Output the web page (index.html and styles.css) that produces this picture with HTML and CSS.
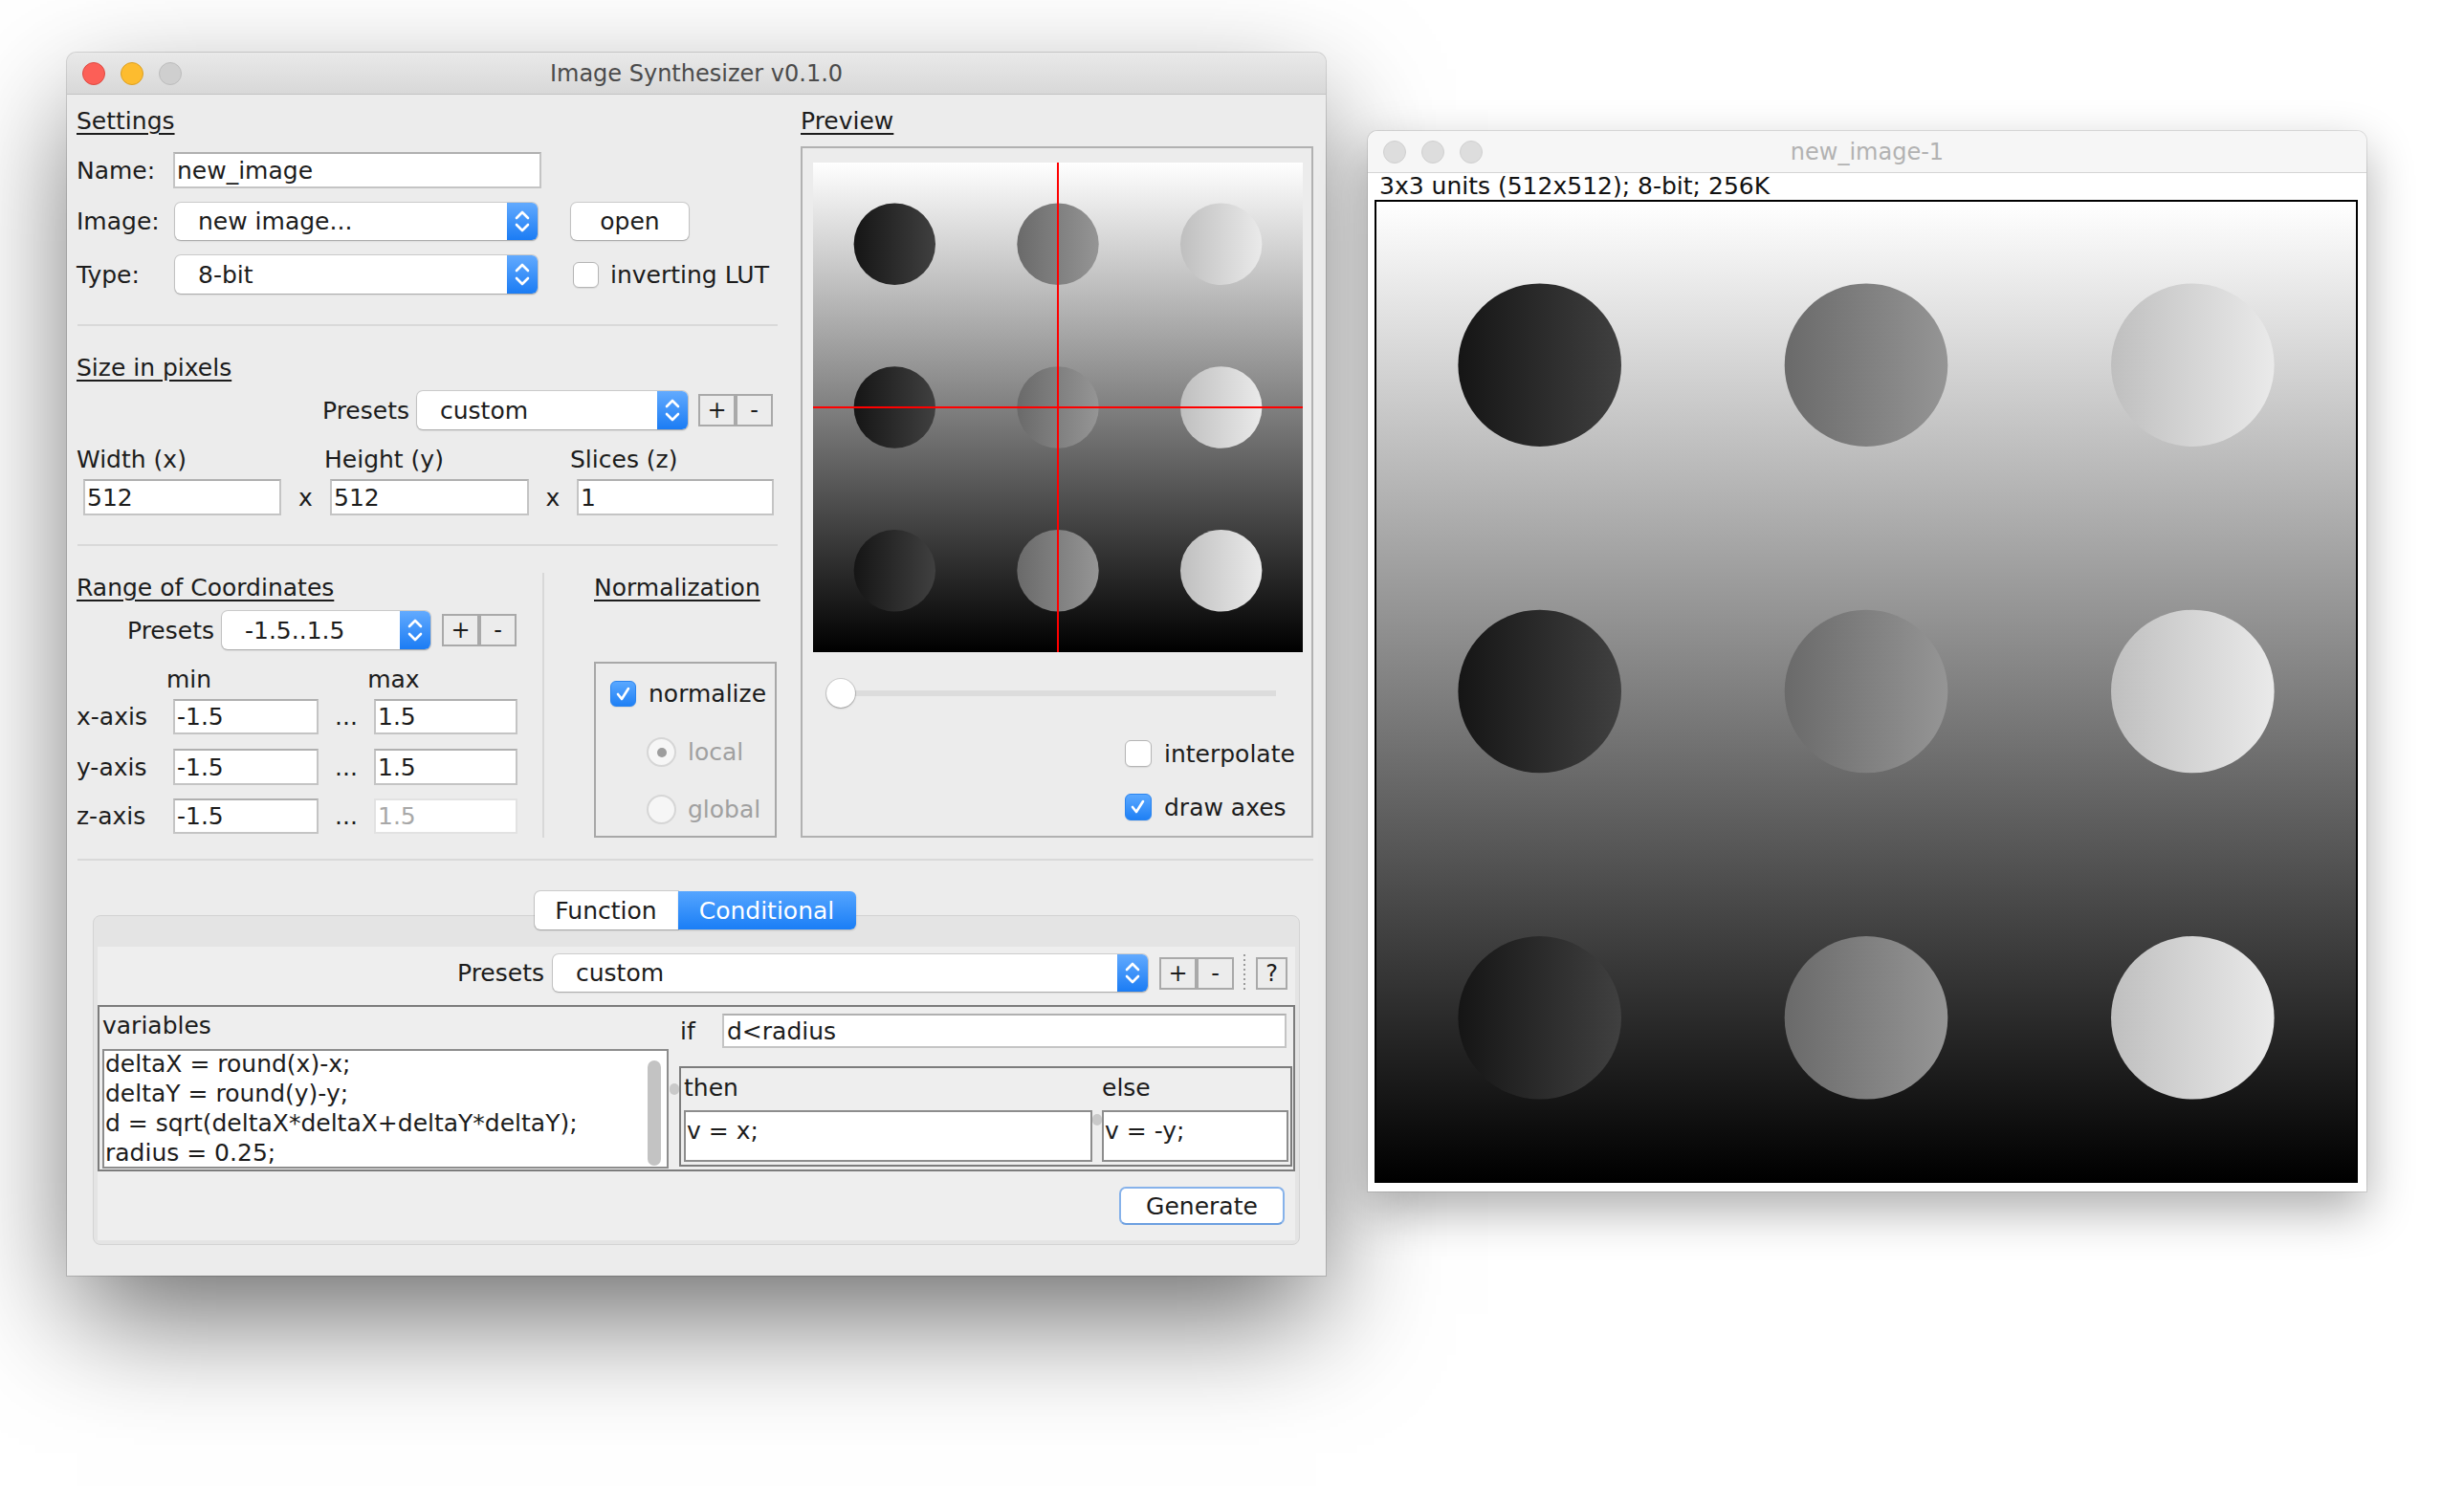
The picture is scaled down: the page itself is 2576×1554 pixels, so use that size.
FILE: index.html
```html
<!DOCTYPE html>
<html>
<head>
<meta charset="utf-8">
<title>Image Synthesizer</title>
<link rel="stylesheet" href="styles.css">
</head>
<body>
<div class="desk">

  <div class="win main-win">
    <div class="titlebar">
      <div class="lights"><span class="light red"></span><span class="light yellow"></span><span class="light gray"></span></div>
      <div class="title">Image Synthesizer v0.1.0</div>
      <div></div>
    </div>
    <div class="main-body">
      <div class="top">
        <div class="left-col">
          <div class="hdr h-settings">Settings</div>
          <div class="row r-name"><span class="lbl w101">Name:</span><div class="field w385">new_image</div></div>
          <div class="row r-image"><span class="lbl w103">Image:</span>
            <div class="combo w379"><span class="ctext">new image...</span><span class="carrow"><svg width="32" height="39" viewBox="0 0 32 39"><path d="M10 16 L16 10 L22 16" fill="none" stroke="#fff" stroke-width="2.6" stroke-linecap="round" stroke-linejoin="round"/><path d="M10 23 L16 29 L22 23" fill="none" stroke="#fff" stroke-width="2.6" stroke-linecap="round" stroke-linejoin="round"/></svg></span></div>
            <div class="btn open">open</div>
          </div>
          <div class="row r-type"><span class="lbl w103">Type:</span>
            <div class="combo w379"><span class="ctext">8-bit</span><span class="carrow"><svg width="32" height="40" viewBox="0 0 32 40"><path d="M10 16 L16 10 L22 16" fill="none" stroke="#fff" stroke-width="2.6" stroke-linecap="round" stroke-linejoin="round"/><path d="M10 24 L16 30 L22 24" fill="none" stroke="#fff" stroke-width="2.6" stroke-linecap="round" stroke-linejoin="round"/></svg></span></div>
            <span class="chk inv"></span><span class="chklbl">inverting LUT</span>
          </div>
          <div class="sep sep1"></div>

          <div class="hdr h-size">Size in pixels</div>
          <div class="row r-presets">
            <span class="lbl plbl">Presets</span>
            <div class="combo w283"><span class="ctext">custom</span><span class="carrow"><svg width="32" height="40" viewBox="0 0 32 40"><path d="M10 16 L16 10 L22 16" fill="none" stroke="#fff" stroke-width="2.6" stroke-linecap="round" stroke-linejoin="round"/><path d="M10 24 L16 30 L22 24" fill="none" stroke="#fff" stroke-width="2.6" stroke-linecap="round" stroke-linejoin="round"/></svg></span></div>
            <div class="pm pm-size"><span>+</span><span>-</span></div>
          </div>
          <div class="row r-dimlbl"><span>Width (x)</span><span>Height (y)</span><span>Slices (z)</span></div>
          <div class="row r-dims">
            <div class="field w207">512</div><span class="xs w51">x</span>
            <div class="field w208">512</div><span class="xs w50">x</span>
            <div class="field w206">1</div>
          </div>
          <div class="sep sep2"></div>

          <div class="range-sec">
            <div class="range-left">
              <div class="hdr">Range of Coordinates</div>
              <div class="row r-rpresets">
                <span class="lbl rplbl">Presets</span>
                <div class="combo w218"><span class="ctext">-1.5..1.5</span><span class="carrow"><svg width="32" height="40" viewBox="0 0 32 40"><path d="M10 16 L16 10 L22 16" fill="none" stroke="#fff" stroke-width="2.6" stroke-linecap="round" stroke-linejoin="round"/><path d="M10 24 L16 30 L22 24" fill="none" stroke="#fff" stroke-width="2.6" stroke-linecap="round" stroke-linejoin="round"/></svg></span></div>
                <div class="pm pm-range"><span>+</span><span>-</span></div>
              </div>
              <div class="row r-minmax"><span class="mn">min</span><span class="mx">max</span></div>
              <div class="row r-axis r-x"><span class="lbl w101">x-axis</span><div class="field w152">-1.5</div><span class="dots">...</span><div class="field w150">1.5</div></div>
              <div class="row r-axis r-y"><span class="lbl w101">y-axis</span><div class="field w152">-1.5</div><span class="dots">...</span><div class="field w150">1.5</div></div>
              <div class="row r-axis r-z"><span class="lbl w101">z-axis</span><div class="field w152">-1.5</div><span class="dots">...</span><div class="field w150 disabled">1.5</div></div>
            </div>
            <div class="vsep"></div>
            <div class="norm">
              <div class="hdr">Normalization</div>
              <div class="nbox">
                <div class="nrow n-norm"><span class="chk on"><svg width="27" height="27" viewBox="0 0 27 27"><path d="M8 14 L12 19 L19 8" fill="none" stroke="#fff" stroke-width="2.6" stroke-linecap="round" stroke-linejoin="round"/></svg></span><span class="chklbl">normalize</span></div>
                <div class="nrow n-local"><span class="radio sel"><span class="rdot"></span></span><span class="rlbl">local</span></div>
                <div class="nrow n-global"><span class="radio"></span><span class="rlbl">global</span></div>
              </div>
            </div>
          </div>
        </div>

        <div class="right-col">
          <div class="hdr h-preview">Preview</div>
          <div class="pbox">
            <div class="pimg">
              <svg width="512" height="512" viewBox="0 0 512 512">
                <defs>
                  <linearGradient id="pbg" x1="0" y1="0" x2="0" y2="1"><stop offset="0" stop-color="#ffffff"/><stop offset="1" stop-color="#000000"/></linearGradient>
                  <linearGradient id="pc1"><stop offset="0" stop-color="#151515"/><stop offset="1" stop-color="#404040"/></linearGradient>
                  <linearGradient id="pc2"><stop offset="0" stop-color="#6a6a6a"/><stop offset="1" stop-color="#959595"/></linearGradient>
                  <linearGradient id="pc3"><stop offset="0" stop-color="#bfbfbf"/><stop offset="1" stop-color="#eaeaea"/></linearGradient>
                </defs>
                <rect width="512" height="512" fill="url(#pbg)"/>
                <circle cx="85.3" cy="85.3" r="42.7" fill="url(#pc1)"/>
                <circle cx="256" cy="85.3" r="42.7" fill="url(#pc2)"/>
                <circle cx="426.7" cy="85.3" r="42.7" fill="url(#pc3)"/>
                <circle cx="85.3" cy="256" r="42.7" fill="url(#pc1)"/>
                <circle cx="256" cy="256" r="42.7" fill="url(#pc2)"/>
                <circle cx="426.7" cy="256" r="42.7" fill="url(#pc3)"/>
                <circle cx="85.3" cy="426.7" r="42.7" fill="url(#pc1)"/>
                <circle cx="256" cy="426.7" r="42.7" fill="url(#pc2)"/>
                <circle cx="426.7" cy="426.7" r="42.7" fill="url(#pc3)"/>
                <rect x="255" y="0" width="2" height="512" fill="#ff0000" shape-rendering="crispEdges"/>
                <rect x="0" y="255" width="512" height="2" fill="#ff0000" shape-rendering="crispEdges"/>
              </svg>
            </div>
            <div class="slider"><span class="thumb"></span></div>
            <div class="prow pr-interp"><span class="chk"></span><span class="chklbl">interpolate</span></div>
            <div class="prow pr-axes"><span class="chk on"><svg width="27" height="27" viewBox="0 0 27 27"><path d="M8 14 L12 19 L19 8" fill="none" stroke="#fff" stroke-width="2.6" stroke-linecap="round" stroke-linejoin="round"/></svg></span><span class="chklbl">draw axes</span></div>
          </div>
        </div>
      </div>

      <div class="sep sep3"></div>

      <div class="tabs"><span class="tab tab-fn">Function</span><span class="tab tab-cond">Conditional</span></div>
      <div class="panel">
        <div class="panel-inner">
          <div class="row r-bpresets">
            <span class="lbl bplbl">Presets</span>
            <div class="combo w622"><span class="ctext">custom</span><span class="carrow"><svg width="32" height="39" viewBox="0 0 32 39"><path d="M10 16 L16 10 L22 16" fill="none" stroke="#fff" stroke-width="2.6" stroke-linecap="round" stroke-linejoin="round"/><path d="M10 23 L16 29 L22 23" fill="none" stroke="#fff" stroke-width="2.6" stroke-linecap="round" stroke-linejoin="round"/></svg></span></div>
            <div class="pm pm-bottom"><span>+</span><span>-</span></div>
            <span class="dotsep"></span>
            <span class="qbtn">?</span>
          </div>
          <div class="codebox">
            <div class="varpane">
              <div class="varlbl">variables</div>
              <div class="textarea vars">
                <div class="lines">deltaX = round(x)-x;<br>deltaY = round(y)-y;<br>d = sqrt(deltaX*deltaX+deltaY*deltaY);<br>radius = 0.25;</div>
                <div class="scroll"><span class="sthumb"></span></div>
              </div>
            </div>
            <div class="splitter s-main"><span class="sdot"></span></div>
            <div class="condpane">
              <div class="ifrow"><span class="iflbl">if</span><div class="field ifield">d&lt;radius</div></div>
              <div class="tebox">
                <span class="tlbl">then</span><span></span><span class="tlbl">else</span>
                <div class="textarea small">v = x;</div>
                <div class="splitter s-te"><span class="sdot"></span></div>
                <div class="textarea small">v = -y;</div>
              </div>
            </div>
          </div>
          <div class="genrow"><span class="genbtn">Generate</span></div>
        </div>
      </div>
    </div>
  </div>

  <div class="win img-win">
    <div class="titlebar tb-light">
      <div class="lights"><span class="light dimlight"></span><span class="light dimlight"></span><span class="light dimlight"></span></div>
      <div class="title dimtitle">new_image-1</div>
      <div></div>
    </div>
    <div class="info">3x3 units (512x512); 8-bit; 256K</div>
    <div class="bigimg">
      <svg width="1024" height="1024" viewBox="0 0 1024 1024">
        <defs>
          <linearGradient id="bbg" x1="0" y1="0" x2="0" y2="1"><stop offset="0" stop-color="#ffffff"/><stop offset="1" stop-color="#000000"/></linearGradient>
          <linearGradient id="bc1"><stop offset="0" stop-color="#151515"/><stop offset="1" stop-color="#404040"/></linearGradient>
          <linearGradient id="bc2"><stop offset="0" stop-color="#6a6a6a"/><stop offset="1" stop-color="#959595"/></linearGradient>
          <linearGradient id="bc3"><stop offset="0" stop-color="#bfbfbf"/><stop offset="1" stop-color="#eaeaea"/></linearGradient>
        </defs>
        <rect width="1024" height="1024" fill="url(#bbg)"/>
        <circle cx="170.7" cy="170.7" r="85.3" fill="url(#bc1)"/>
        <circle cx="512" cy="170.7" r="85.3" fill="url(#bc2)"/>
        <circle cx="853.3" cy="170.7" r="85.3" fill="url(#bc3)"/>
        <circle cx="170.7" cy="512" r="85.3" fill="url(#bc1)"/>
        <circle cx="512" cy="512" r="85.3" fill="url(#bc2)"/>
        <circle cx="853.3" cy="512" r="85.3" fill="url(#bc3)"/>
        <circle cx="170.7" cy="853.3" r="85.3" fill="url(#bc1)"/>
        <circle cx="512" cy="853.3" r="85.3" fill="url(#bc2)"/>
        <circle cx="853.3" cy="853.3" r="85.3" fill="url(#bc3)"/>
      </svg>
    </div>
  </div>

</div>
</body>
</html>
```
FILE: styles.css
```css
* { box-sizing: border-box; }
html, body { margin: 0; padding: 0; }
body {
  width: 2576px; height: 1554px; overflow: hidden; background: #ffffff;
  font-family: "DejaVu Sans", "Liberation Sans", sans-serif; font-size: 25px; color: #1c1c1c;
}
.desk { position: relative; width: 2576px; height: 1554px; }
.win { position: absolute; }

/* main window */
.main-win {
  left: 70px; top: 55px; width: 1316px; height: 1279px;
  background: #ececec; border-radius: 10px 10px 0 0;
  box-shadow: 0 50px 120px -10px rgba(0,0,0,0.6), 0 0 0 1px rgba(0,0,0,0.14);
}
.titlebar {
  height: 44px; display: grid; grid-template-columns: 1fr auto 1fr; align-items: center;
  background: linear-gradient(#e9e9e9, #d8d8d8); border-bottom: 1px solid #c3c3c3;
  border-radius: 10px 10px 0 0;
}
.lights { display: flex; gap: 16px; padding-left: 16px; }
.light { width: 24px; height: 24px; border-radius: 50%; display: block; }
.red { background: #fc5f57; border: 1px solid #de4a42; }
.yellow { background: #fdbc2f; border: 1px solid #dca024; }
.gray { background: #cfcfcf; border: 1px solid #bdbdbd; }
.title { font-size: 24px; color: #4b4b4b; white-space: nowrap; }

.main-body { padding: 0 13px 0 10px; }
.top { display: flex; }
.left-col { width: 733px; }
.right-col { width: 536px; margin-left: 24px; }

.hdr { height: 30px; line-height: 30px; text-decoration: underline; text-underline-offset: 4px; text-decoration-thickness: 2px; white-space: nowrap; }
.h-settings, .h-preview { margin-top: 13px; }

.row { display: flex; align-items: center; white-space: nowrap; }
.lbl { display: inline-block; flex: none; }
.w101 { width: 101px; }
.w103 { width: 103px; }

.field {
  height: 100%; background: #fff; border: 2px solid #c4c4c4; border-top-color: #b0b0b0;
  display: flex; align-items: center; padding-left: 2px; flex: none;
}
.field.disabled { color: #a8a8a8; border-color: #e2e2e2; }
.w385 { width: 385px; }
.w207 { width: 207px; }
.w208 { width: 208px; }
.w206 { width: 206px; }
.w152 { width: 152px; }
.w150 { width: 150px; }

.combo {
  height: 100%; display: flex; align-items: stretch; background: #fff; border-radius: 6px; flex: none;
  box-shadow: 0 0 0 1px rgba(0,0,0,0.13), 0 1px 2px rgba(0,0,0,0.22);
}
.ctext { flex: 1; display: flex; align-items: center; padding-left: 24px; }
.carrow {
  width: 32px; flex: none; border-radius: 0 6px 6px 0;
  background: linear-gradient(#62aafe, #1b7cf4); display: flex; align-items: center; justify-content: center;
}
.carrow svg { display: block; }
.w379 { width: 379px; }
.w283 { width: 283px; }
.w218 { width: 218px; }
.w622 { width: 622px; }

.btn {
  height: 100%; display: flex; align-items: center; justify-content: center; background: #fff;
  border-radius: 6px; box-shadow: 0 0 0 1px rgba(0,0,0,0.13), 0 1px 2px rgba(0,0,0,0.22);
}
.open { width: 123px; margin-left: 35px; }

.chk {
  width: 27px; height: 27px; flex: none; border-radius: 6px; background: #fff;
  border: 1px solid #b5b5b5; box-shadow: 0 1px 1px rgba(0,0,0,0.08); display: flex;
}
.chk.on { background: linear-gradient(#5aa8ff, #1f80f5); border-color: #2a84ef; }
.chk svg { display: block; margin: -1px; }
.chklbl { margin-left: 12px; }
.inv { margin-left: 37px; }

.r-name { margin-top: 17px; height: 38px; }
.r-image { margin-top: 15px; height: 39px; }
.r-type { margin-top: 16px; height: 40px; }

.sep { height: 2px; background: #d9d9d9; }
.sep1 { margin-top: 32px; margin-left: 1px; }
.h-size { margin-top: 29px; }
.r-presets { margin-top: 9px; height: 40px; }
.plbl { width: 99px; margin-left: 257px; }
.pm { display: flex; height: 34px; flex: none; }
.pm span {
  width: 39px; height: 34px; border: 2px solid #a9a9a9; background: #ececec;
  display: flex; align-items: center; justify-content: center; font-size: 24px;
}
.pm-size { margin-left: 11px; }
.r-dimlbl { margin-top: 16px; height: 30px; display: grid; grid-template-columns: 259px 257px 1fr; }
.r-dims { margin-top: 6px; height: 38px; padding-left: 7px; }
.xs { text-align: center; flex: none; }
.w51 { width: 51px; }
.w50 { width: 50px; }
.sep2 { margin-top: 30px; margin-left: 1px; }

.range-sec { display: flex; align-items: flex-start; }
.range-left { width: 487px; padding-top: 29px; }
.r-rpresets { margin-top: 9px; height: 40px; }
.rplbl { width: 99px; margin-left: 53px; }
.pm-range { margin-left: 12px; }
.r-minmax { margin-top: 16px; height: 30px; }
.mn { margin-left: 94px; }
.mx { margin-left: 163px; }
.r-x { margin-top: 6px; height: 37px; }
.r-y { margin-top: 15px; height: 38px; }
.r-z { margin-top: 14px; height: 37px; }
.dots { width: 58px; text-align: center; flex: none; }
.vsep { width: 2px; height: 277px; margin-top: 28px; background: #d8d8d8; flex: none; }
.norm { margin-left: 52px; width: 191px; padding-top: 29px; }
.nbox { margin-top: 62px; height: 184px; border: 2px solid #a8a8a8; padding-left: 15px; padding-top: 18px; }
.nrow { display: flex; align-items: center; white-space: nowrap; }
.n-norm { height: 27px; margin-left: 0; }
.chklbl { white-space: nowrap; }
.n-norm .chklbl { margin-left: 13px; }
.n-local { height: 31px; margin-top: 32px; margin-left: 38px; }
.n-global { height: 31px; margin-top: 29px; margin-left: 38px; }
.radio {
  width: 31px; height: 31px; border-radius: 50%; border: 2px solid #d6d6d6; background: #f6f6f6;
  display: flex; align-items: center; justify-content: center; flex: none;
}
.rdot { width: 10px; height: 10px; border-radius: 50%; background: #9d9d9d; }
.rlbl { margin-left: 12px; color: #a0a0a0; }

/* preview */
.pbox { margin-top: 11px; height: 723px; border: 2px solid #b1b1b1; }
.pimg { margin-left: 11px; margin-top: 15px; width: 512px; height: 512px; }
.pimg svg, .bigimg svg { display: block; }
.slider {
  margin-top: 28px; margin-left: 25px; width: 470px; height: 30px; display: flex; align-items: center;
  background: linear-gradient(transparent 12px, #dcdcdc 12px, #dcdcdc 18px, transparent 18px);
  border-radius: 3px;
}
.thumb {
  width: 30px; height: 30px; border-radius: 50%; background: #fff;
  box-shadow: 0 0 0 1px rgba(0,0,0,0.12), 0 1px 2px rgba(0,0,0,0.25);
}
.prow { display: flex; align-items: center; padding-left: 337px; height: 28px; }
.prow .chk { width: 28px; height: 28px; }
.prow .chklbl { margin-left: 13px; }
.pr-interp { margin-top: 34px; }
.pr-axes { margin-top: 28px; }

.sep3 { margin-top: 22px; margin-left: 1px; }

/* tabs */
.tabs { margin-top: 32px; height: 40px; display: flex; justify-content: center; margin-bottom: -15px; position: relative; z-index: 1; }
.tab { height: 40px; display: flex; align-items: center; justify-content: center; }
.tab-fn {
  width: 150px; background: #fff; border-radius: 6px 0 0 6px;
  box-shadow: 0 0 0 1px rgba(0,0,0,0.13), 0 1px 2px rgba(0,0,0,0.2);
}
.tab-cond {
  width: 186px; color: #fff; background: linear-gradient(#55a5ff, #1a7ef6); border-radius: 0 6px 6px 0;
  box-shadow: 0 1px 2px rgba(0,0,0,0.2);
}
.panel {
  margin: 0 14px 0 17px; height: 345px; border: 1px solid #d3d3d3; border-radius: 8px;
  background: #e4e4e4; padding: 32px 4px 4px 4px;
}
.panel-inner { height: 100%; background: #eeeeee; }
.r-bpresets { padding-top: 8px; height: 47px; }
.bplbl { width: 100px; margin-left: 376px; }
.pm-bottom { margin-left: 12px; }
.pm-bottom span { width: 39px; }
.dotsep { width: 2px; height: 39px; margin-left: 10px; background: repeating-linear-gradient(#9a9a9a 0 2px, transparent 2px 5px); flex: none; }
.qbtn {
  width: 33px; height: 34px; margin-left: 11px; border: 2px solid #a9a9a9; background: #ececec;
  display: flex; align-items: center; justify-content: center; font-size: 24px; flex: none;
}

.codebox {
  margin-top: 14px; height: 174px; border: 2px solid #7c7c7c; display: flex; font-size: 25px;
}
.varpane { width: 595px; padding-left: 3px; flex: none; }
.varlbl { height: 44px; line-height: 40px; }
.textarea { background: #fff; border: 2px solid #8d8d8d; }
.vars { height: 125px; display: flex; }
.lines { flex: 1; line-height: 31px; padding-left: 1px; margin-top: -2px; white-space: nowrap; overflow: hidden; }
.scroll { width: 26px; flex: none; display: flex; justify-content: center; padding-top: 10px; }
.sthumb { width: 14px; height: 110px; border-radius: 7px; background: #c3c3c3; }
.splitter { display: flex; justify-content: center; flex: none; }
.s-main { width: 11px; padding-top: 80px; }
.sdot { width: 10px; height: 12px; border-radius: 5px; background: #c9c9c9; }
.condpane { width: 641px; flex: none; }
.ifrow { margin-top: 7px; height: 36px; display: flex; align-items: center; }
.iflbl { width: 45px; padding-left: 1px; }
.ifield { width: 590px; padding-left: 3px; }
.tebox {
  margin-top: 19px; height: 105px; border: 2px solid #7c7c7c; padding-left: 3px;
  display: grid; grid-template-columns: 427px 10px 195px; grid-template-rows: 44px 54px;
}
.tlbl { line-height: 42px; }
.small { line-height: 40px; padding-left: 1px; }
.s-te { padding-top: 4px; }
.genrow { margin-top: 16px; display: flex; justify-content: flex-end; padding-right: 11px; }
.genbtn {
  width: 173px; height: 40px; border-radius: 7px; background: #fff; border: 2px solid #86b2ea;
  border-bottom-color: #6c9fe0; display: flex; align-items: center; justify-content: center;
}

/* image window */
.img-win {
  left: 1430px; top: 137px; width: 1044px; height: 1109px; background: #fff;
  border-radius: 10px 10px 0 0;
  box-shadow: 0 20px 50px rgba(0,0,0,0.32), 0 0 0 1px rgba(0,0,0,0.1);
}
.tb-light { background: #f6f6f6; border-bottom: 1px solid #d4d4d4; }
.dimlight { background: #dddddd; border: 1px solid #d0d0d0; }
.dimtitle { color: #b2b2b2; }
.info { height: 28px; line-height: 28px; padding-left: 12px; color: #111; white-space: nowrap; }
.bigimg { margin-left: 7px; width: 1028px; height: 1028px; border: 2px solid #000; }
```
